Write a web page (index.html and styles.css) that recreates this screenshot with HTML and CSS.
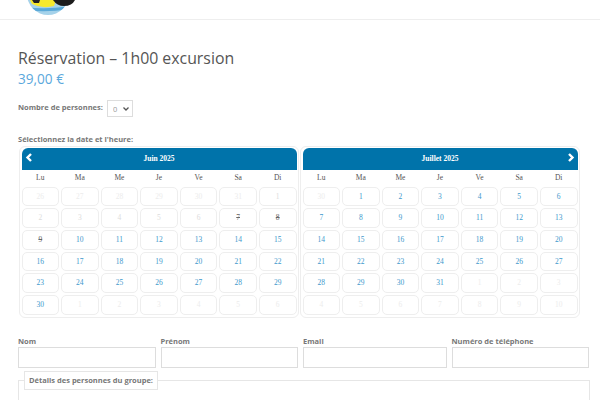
FILE: index.html
```html
<!DOCTYPE html>
<html lang="fr">
<head>
  <meta charset="UTF-8">
  <title>Réservation – 1h00 excursion</title>
  <link rel="stylesheet" href="styles.css">
</head>
<body>
  <header class="site-header">
    <svg class="logo" width="60" height="19" viewBox="0 0 60 19">
      <defs><clipPath id="logoClip"><circle cx="28" cy="-6" r="21"/></clipPath></defs>
      <circle cx="28" cy="-6" r="21" fill="#a5d2ea"/>
      <path d="M6 7 Q25 10 50 6 V9 Q25 13 6 10 Z" fill="#5aa9d8" clip-path="url(#logoClip)"/>
      <path d="M10 0 H36 L34 6 Q22 9 12 4 Z" fill="#f6e92c"/>
      <path d="M12 0 H20 L19 3 H14 Z" fill="#222"/>
      <path d="M33 0 H55 Q52 6 44 6 Q37 6 33 0 Z" fill="#1c1c1c"/>
    </svg>
  </header>

  <main class="content">
    <h1 class="title">Réservation – 1h00 excursion</h1>
    <p class="price">39,00 €</p>

    <div class="people-row">
      <label class="field-label" for="people">Nombre de personnes:</label>
      <div class="select-wrap">
        <select id="people" class="people-select">
          <option>0</option>
        </select>
        <svg class="select-arrow" width="6" height="4" viewBox="0 0 6 4"><path d="M0.5 0.5 L3 3 L5.5 0.5" fill="none" stroke="#555" stroke-width="1.3"/></svg>
      </div>
    </div>

    <p class="field-label date-label">Sélectionnez la date et l'heure:</p>

    <div class="calendars">
      <section class="calendar">
        <div class="cal-head">
          <span class="cal-nav cal-prev">
            <svg width="8" height="9" viewBox="0 0 8 9"><path d="M6 1 L2.5 4.5 L6 8" fill="none" stroke="#fff" stroke-width="2.4"/></svg>
          </span>
          Juin 2025
        </div>
        <div class="cal-grid">
          <span class="dow">Lu</span><span class="dow">Ma</span><span class="dow">Me</span><span class="dow">Je</span><span class="dow">Ve</span><span class="dow">Sa</span><span class="dow">Di</span>
          <span class="day off">26</span><span class="day off">27</span><span class="day off">28</span><span class="day off">29</span><span class="day off">30</span><span class="day off">31</span><span class="day past">1</span>
          <span class="day past">2</span><span class="day past">3</span><span class="day past">4</span><span class="day past">5</span><span class="day past">6</span><span class="day closed">7</span><span class="day closed">8</span>
          <span class="day closed">9</span><span class="day">10</span><span class="day">11</span><span class="day">12</span><span class="day">13</span><span class="day">14</span><span class="day">15</span>
          <span class="day">16</span><span class="day">17</span><span class="day">18</span><span class="day">19</span><span class="day">20</span><span class="day">21</span><span class="day">22</span>
          <span class="day">23</span><span class="day">24</span><span class="day">25</span><span class="day">26</span><span class="day">27</span><span class="day">28</span><span class="day">29</span>
          <span class="day">30</span><span class="day off">1</span><span class="day off">2</span><span class="day off">3</span><span class="day off">4</span><span class="day off">5</span><span class="day off">6</span>
        </div>
      </section>

      <section class="calendar">
        <div class="cal-head">
          Juillet 2025
          <span class="cal-nav cal-next">
            <svg width="8" height="9" viewBox="0 0 8 9"><path d="M2 1 L5.5 4.5 L2 8" fill="none" stroke="#fff" stroke-width="2.4"/></svg>
          </span>
        </div>
        <div class="cal-grid">
          <span class="dow">Lu</span><span class="dow">Ma</span><span class="dow">Me</span><span class="dow">Je</span><span class="dow">Ve</span><span class="dow">Sa</span><span class="dow">Di</span>
          <span class="day off">30</span><span class="day">1</span><span class="day">2</span><span class="day">3</span><span class="day">4</span><span class="day">5</span><span class="day">6</span>
          <span class="day">7</span><span class="day">8</span><span class="day">9</span><span class="day">10</span><span class="day">11</span><span class="day">12</span><span class="day">13</span>
          <span class="day">14</span><span class="day">15</span><span class="day">16</span><span class="day">17</span><span class="day">18</span><span class="day">19</span><span class="day">20</span>
          <span class="day">21</span><span class="day">22</span><span class="day">23</span><span class="day">24</span><span class="day">25</span><span class="day">26</span><span class="day">27</span>
          <span class="day">28</span><span class="day">29</span><span class="day">30</span><span class="day">31</span><span class="day off">1</span><span class="day off">2</span><span class="day off">3</span>
          <span class="day off">4</span><span class="day off">5</span><span class="day off">6</span><span class="day off">7</span><span class="day off">8</span><span class="day off">9</span><span class="day off">10</span>
        </div>
      </section>
    </div>

    <div class="contact-row">
      <div class="form-group">
        <label class="field-label" for="nom">Nom</label>
        <input id="nom" type="text">
      </div>
      <div class="form-group">
        <label class="field-label" for="prenom">Prénom</label>
        <input id="prenom" type="text">
      </div>
      <div class="form-group">
        <label class="field-label" for="email">Email</label>
        <input id="email" type="text">
      </div>
      <div class="form-group">
        <label class="field-label" for="tel">Numéro de téléphone</label>
        <input id="tel" type="text">
      </div>
    </div>

    <fieldset class="group-details">
      <legend>Détails des personnes du groupe:</legend>
    </fieldset>
  </main>
</body>
</html>
```

FILE: styles.css
```css
* {
  box-sizing: border-box;
  margin: 0;
  padding: 0;
}
html, body {
  height: 400px;
  overflow: hidden;
}
body {
  background-color: white;
  color: #666;
  font-family: "Open Sans", sans-serif;
}
.site-header {
  height: 20px;
  border-bottom: 1px solid #eee;
  padding-left: 20px;
  overflow: hidden;
}
.logo {
  display: block;
}
.content {
  padding: 27px 10px 0 18px;
}
.title {
  font-size: 15.85px;
  font-weight: 400;
  line-height: 22px;
  color: #555;
}
.price {
  font-size: 13.6px;
  line-height: 20px;
  color: #5ba8dc;
}
.field-label {
  display: block;
  font-size: 7.5px;
  font-weight: 700;
  line-height: 12px;
  color: #777;
}
.people-row {
  display: flex;
  align-items: center;
  gap: 4px;
  margin-top: 11px;
  height: 17px;
}
.people-row .field-label {
  margin-top: -4px;
}
.select-wrap {
  position: relative;
}
.people-select {
  display: block;
  width: 26px;
  height: 17px;
  border: 1px solid #ddd;
  background-color: white;
  color: #999;
  font-family: "Open Sans", sans-serif;
  font-size: 7.5px;
  padding-left: 5px;
  appearance: none;
}
.select-arrow {
  position: absolute;
  top: 7px;
  right: 4px;
}
.date-label {
  margin-top: 16px;
}
.calendars {
  display: flex;
  gap: 1px;
  margin-top: 1px;
  margin-left: 1px;
}
.calendar {
  width: 280px;
  height: 172px;
  border: 1px solid #eee;
  border-radius: 6px;
  padding: 1px 1.5px 0;
}
.cal-head {
  position: relative;
  height: 22px;
  background-color: #0073aa;
  border-radius: 6px 6px 0 0;
  color: white;
  font-family: "Liberation Serif", serif;
  font-size: 7.5px;
  font-weight: 700;
  line-height: 22px;
  text-align: center;
}
.cal-nav {
  position: absolute;
  top: 5px;
  line-height: 0;
}
.cal-prev {
  left: 3px;
}
.cal-next {
  right: 3px;
}
.cal-grid {
  display: grid;
  grid-template-columns: repeat(7, 1fr);
  grid-template-rows: 14.7px;
  grid-auto-rows: 19.7px;
  gap: 2px;
  font-family: "Liberation Serif", serif;
  font-size: 7.5px;
  text-align: center;
}
.dow {
  line-height: 16px;
  color: #555;
}
.day {
  border: 1px solid #eee;
  border-radius: 5px;
  line-height: 18px;
  color: #3d98cc;
}
.day.off {
  color: #ececec;
}
.day.past {
  color: #dcdcdc;
}
.day.closed {
  color: #666;
  text-decoration: line-through;
}
.contact-row {
  display: grid;
  grid-template-columns: 137.5px 137.5px 143.5px 137.5px;
  gap: 5px;
  margin-top: 17px;
}
.form-group input {
  display: block;
  width: 100%;
  height: 21px;
  border: 1px solid #ddd;
  background-color: white;
}
.group-details {
  height: 60px;
  margin-top: 3px;
  border: 1px solid #e6e6e6;
  padding: 0 5px;
}
.group-details legend {
  width: 134px;
  height: 19px;
  border: 1px solid #e6e6e6;
  background-color: white;
  font-size: 7.5px;
  font-weight: 700;
  line-height: 17px;
  padding-left: 4px;
  text-align: left;
  white-space: nowrap;
  color: #777;
}
```
